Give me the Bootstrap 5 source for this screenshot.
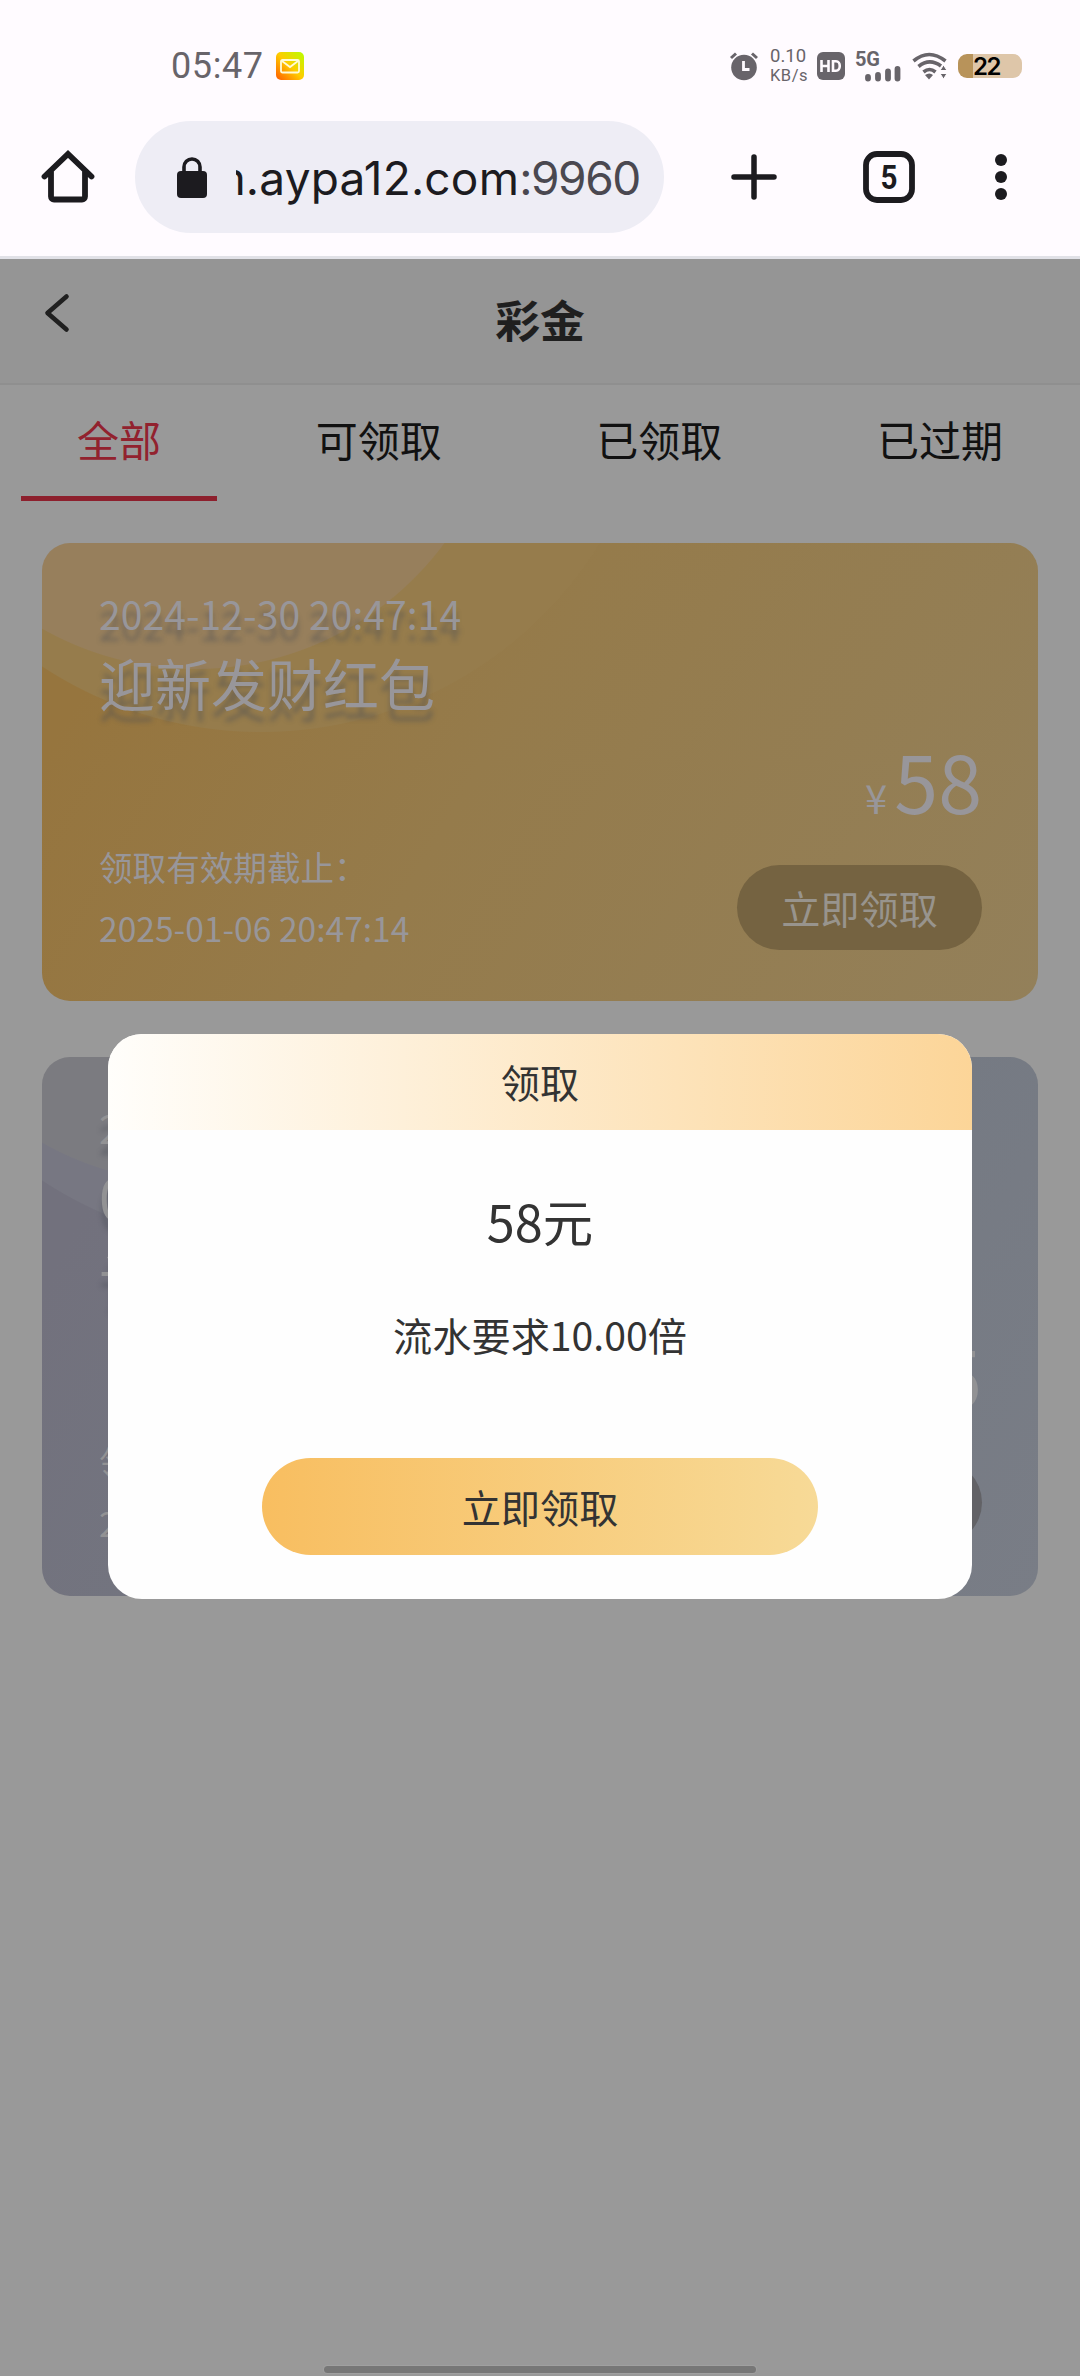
<!DOCTYPE html>
<html lang="zh-CN">
<head>
<meta charset="utf-8">
<meta name="viewport" content="width=device-width, initial-scale=1">
<title>彩金</title>
<link href="https://cdn.jsdelivr.net/npm/bootstrap@5.3.0/dist/css/bootstrap.min.css" rel="stylesheet">
<style>
  body { background:#999; font-family:"Noto Sans CJK SC",sans-serif; font-weight:400; color:#111; width:1080px; height:2376px; overflow:hidden; line-height:1.448; }
  svg { display:block; flex:none; overflow:visible; }
  .chrome-top { background:#fffbff; height:259px; border-bottom:3px solid #e1e1e7; }
  .status-row { height:121px; padding:11px 58px 0 171px; color:#68646a; font-family:Roboto,sans-serif; line-height:1; }
  .clock { font-size:36px; letter-spacing:.6px; width:105px; }
  .rate { font-size:18.5px; width:34px; margin:0 13px 0 12px; line-height:19px; white-space:nowrap; }
  .rate .speed-unit { font-size:16.5px; letter-spacing:.5px; }
  .batt { width:64px; height:24px; border-radius:9px; background:linear-gradient(90deg,#b8935a 15px,#dec6a9 15px); color:#000; font:600 24px/25px Inter,sans-serif; padding-left:15px; margin-left:10px; letter-spacing:-1.5px; }
  .bar-row { height:112px; padding-left:41px; }
  .address { width:529px; height:112px; background:#eeedf5; margin-left:41px; padding-left:42px; }
  .url-clip { width:404px; margin-left:29px; overflow:hidden; height:70px; font:400 46px/73px Inter,sans-serif; color:#1c1b20; white-space:nowrap; letter-spacing:.2px; }
  .port { color:#4a4850; letter-spacing:-1.4px; }
  .page-head { height:126px; background:#959595; border-bottom:2px solid #8f8f8f; }
  .page-head h1 { font-size:44.8px; font-weight:700; line-height:119px; color:#1f1f1f; }
  .back { left:43px; top:34px; }
  .filter-tabs { padding:0 21px; height:116px; }
  .filter-tabs .nav-link { padding:0 56px; font-size:42px; line-height:108px; height:116px; color:#111; border-bottom:5px solid transparent; border-radius:0; }
  .filter-tabs .nav-link.active { color:#92222e; border-color:#8d202d; }
  .coupons { padding:42px 42px 0; gap:56px; }
  .coupon { border:0; border-radius:28px; padding:42px 56px 40px 57px; color:#98969a; --inner:#977f5c; --outer:#967c4c;
    background:radial-gradient(circle at 153px -184px,var(--inner) 309.5px,transparent 310.5px),radial-gradient(circle at 219px -209px,var(--outer) 397.5px,transparent 398.5px),var(--base); }
  .gold { --base:linear-gradient(120deg,#96753e 10%,#957b4b 45%,#93805a 100%); height:458px; }
  .slate { --inner:#7b7b80; --outer:#777782; --base:linear-gradient(120deg,#72717d 10%,#747982 60%,#797d86 100%); height:539px; color:#929294; }
  .when { font-size:39.2px; line-height:56px; text-shadow:0 11px 5px rgba(70,75,85,.45); }
  .what { font-size:56px; line-height:81px; text-shadow:0 11px 5px rgba(70,75,85,.45); }
  .until { font-size:33.6px; line-height:61px; margin-bottom:-8px; }
  .sum { font-size:79px; line-height:80px; margin-bottom:28px; padding-right:0; }
  .yuan { font-size:40px; margin-right:7px; }
  .pill { width:245px; height:85px; border-radius:43px; font-size:39.2px; line-height:83px; background:#756341; color:#98948d; padding:0; border:0; }
  .slate .pill { background:#626266; }
  .foot-row { margin-bottom:11px; }
  .claim { position:absolute; left:108px; top:1034px; width:864px; height:565px; border-radius:34px; border:0; overflow:hidden; background:#fefefe; color:#333; }
  .claim-head { height:96px; font-size:39.2px; line-height:94px; background:linear-gradient(90deg,#fffefb,#fcd598); }
  .claim-sum { font-size:50.4px; line-height:72px; margin-top:55px; }
  .claim-rule { font-size:39.2px; line-height:56px; margin-top:49px; }
  .claim-btn { width:556px; height:97px; margin:96px auto 0; border:0; border-radius:49px; padding:0; font-size:39.2px; line-height:95px; color:#333; background:linear-gradient(90deg,#f8be60,#f7da97); }
  .gesture { position:absolute; left:324px; top:2366px; width:432px; height:7px; border-radius:4px; background:#777; box-shadow:0 0 0 1px #a0a0a0; }
</style>
</head>
<body class="position-relative">
<header class="chrome-top">
  <div class="status-row d-flex align-items-center">
    <span class="clock">05:47</span>
    <svg width="28" height="28" viewBox="0 0 28 28"><defs><linearGradient id="ml" x1="0" y1="1" x2="1" y2="0"><stop offset="0" stop-color="#ff5a00"/><stop offset=".5" stop-color="#ffcc00"/><stop offset="1" stop-color="#b8ff00"/></linearGradient></defs><rect width="28" height="28" rx="5" fill="url(#ml)"/><rect x="5" y="8" width="18" height="12.500" rx="1.500" fill="none" stroke="#fffbd8" stroke-width="1.800"/><path d="M6 9l8 6 8-6" fill="none" stroke="#fffbd8" stroke-width="1.800"/></svg>
    <div class="d-flex align-items-center ms-auto">
      <svg width="28" height="28" viewBox="0 0 28 28"><circle cx="14" cy="15.500" r="12.800" fill="#68646a"/><path d="M1 6l5-4.500M27 6l-5-4.500" stroke="#68646a" stroke-width="3"/><path d="M13.500 9v8.500h6" fill="none" stroke="#fffbff" stroke-width="2.800"/></svg>
      <div class="rate text-center">0.10<br><span class="speed-unit">KB/s</span></div>
      <svg width="28" height="28" viewBox="0 0 28 28"><rect width="28" height="28" rx="6" fill="#68646a"/><path d="M4.500 8v12M11.500 8v12M4.500 14h7M16 9.300v9.400h3c5 0 5-9.400 0-9.400z" fill="none" stroke="#fffbff" stroke-width="2.600"/></svg>
      <svg width="46" height="32" viewBox="0 0 46 32" style="margin-left:10px"><text x="0" y="16" font-family="Roboto" font-weight="700" font-size="20" textLength="25" fill="#68646a">5G</text><path d="M13 26v1.500M23 24v3.500M33 20.500v7M42.500 18v9.500" transform="translate(0 1)" stroke="#68646a" stroke-width="5.800" stroke-linecap="round"/></svg>
      <svg width="36" height="30" viewBox="0 0 36 30" style="margin-left:11px"><g fill="none" stroke="#68646a" stroke-width="3.600"><path d="M1.500 10q15.500-13 32 0M6.500 15.500q11-9 22.500-.5M11.500 21q6-5 12 0"/></g><path d="M13 24q4.500-3 8 0l-4 4.500z" fill="#68646a"/><path d="M31.500 14l3.500 5.500h-7zM31.500 28l3.500-5.500h-7z" fill="#68646a" stroke="#fffbff" stroke-width="1"/></svg>
      <div class="batt">22</div>
    </div>
  </div>
  <div class="bar-row d-flex align-items-center">
    <svg width="53" height="54" viewBox="0 0 53 54"><path d="M3.500 26.500L27 4l23.500 22.500M10 22v24.500a3 3 0 0 0 3 3h28a3 3 0 0 0 3-3V22" fill="none" stroke="#1c1b1f" stroke-width="5.800" stroke-linecap="round"/></svg>
    <div class="address rounded-pill d-flex align-items-center">
      <svg width="30" height="41" viewBox="0 0 30 41"><rect y="14" width="30" height="27" rx="4" fill="#1c1b1f"/><path d="M7 16v-6a8 8 0 0 1 16 0v6" fill="none" stroke="#1c1b1f" stroke-width="3.600"/></svg>
      <div class="url-clip d-flex justify-content-end"><span>m.aypa12.com<span class="port">:9960</span></span></div>
    </div>
    <svg width="46" height="46" viewBox="0 0 46 46" style="margin-left:67px"><path d="M23 3v40M3 23h40" stroke="#1c1b1f" stroke-width="5.500" stroke-linecap="round"/></svg>
    <svg width="52" height="52" viewBox="0 0 52 52" style="margin-left:86px"><rect x="3" y="3" width="46" height="46" rx="11" fill="none" stroke="#1c1b1f" stroke-width="5.800"/><text x="26" y="37.500" text-anchor="middle" font-family="Roboto" font-weight="700" font-size="33" textLength="17" lengthAdjust="spacingAndGlyphs" fill="#1c1b1f">5</text></svg>
    <svg width="12" height="48" viewBox="0 0 12 48" style="margin-left:80px"><g fill="#1c1b1f"><circle cx="6" cy="7" r="6"/><circle cx="6" cy="24" r="6"/><circle cx="6" cy="41" r="6"/></g></svg>
  </div>
</header>

<main>
  <div class="page-head position-relative text-center">
    <svg class="back position-absolute" width="28" height="40" viewBox="0 0 28 40"><path d="M23.500 3.500L4.500 20l19 16.500" fill="none" stroke="#202020" stroke-width="4.600" stroke-linecap="round" stroke-linejoin="round"/></svg>
    <h1 class="m-0">彩金</h1>
  </div>
  <nav class="nav filter-tabs justify-content-between flex-nowrap">
    <a class="nav-link active" href="#">全部</a>
    <a class="nav-link" href="#">可领取</a>
    <a class="nav-link" href="#">已领取</a>
    <a class="nav-link" href="#">已过期</a>
  </nav>
  <section class="coupons d-flex flex-column">
    <article class="card coupon gold justify-content-between">
      <div><div class="when">2024-12-30 20:47:14</div><div class="what">迎新发财红包</div></div>
      <div class="foot-row d-flex justify-content-between align-items-end">
        <div class="until">领取有效期截止：<br>2025-01-06 20:47:14</div>
        <div class="text-end"><div class="sum"><span class="yuan">¥</span>58</div><button class="btn pill">立即领取</button></div>
      </div>
    </article>
    <article class="card coupon slate justify-content-between">
      <div><div class="when">2</div><div class="what">0<br>认</div></div>
      <div class="foot-row d-flex justify-content-between align-items-end">
        <div class="until">领<br>2</div>
        <div class="text-end"><div class="sum"><span class="yuan">¥</span>5</div><button class="btn pill">&nbsp;</button></div>
      </div>
    </article>
  </section>
</main>

<div class="card claim text-center" role="dialog">
  <div class="claim-head">领取</div>
  <div class="claim-sum">58元</div>
  <div class="claim-rule">流水要求10.00倍</div>
  <button class="btn claim-btn">立即领取</button>
</div>
<div class="gesture"></div>
<script src="https://cdn.jsdelivr.net/npm/bootstrap@5.3.0/dist/js/bootstrap.bundle.min.js"></script>
</body>
</html>
